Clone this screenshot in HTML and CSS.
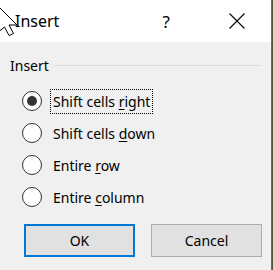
FILE: index.html
```html
<!DOCTYPE html>
<html>
<head>
<meta charset="utf-8">
<link rel="stylesheet" href="styles.css">
</head>
<body>
<div class="dialog">
  <div class="titlebar">
    <span class="title">Insert</span>
    <span class="help">?</span>
    <svg class="close" width="16" height="16" viewBox="0 0 16 16"><path d="M0.5 0.5 L15.5 15.5 M15.5 0.5 L0.5 15.5" stroke="#000" stroke-width="1.1" fill="none"/></svg>
  </div>
  <div class="body">
    <div class="group-head">
      <span class="group-label">Insert</span>
      <span class="group-line"></span>
    </div>
    <div class="options">
      <div class="option">
        <span class="radio checked"></span>
        <span class="label focus">Shift cells <u>r</u>ight</span>
      </div>
      <div class="option">
        <span class="radio"></span>
        <span class="label">Shift cells <u>d</u>own</span>
      </div>
      <div class="option">
        <span class="radio"></span>
        <span class="label">Entire <u>r</u>ow</span>
      </div>
      <div class="option">
        <span class="radio"></span>
        <span class="label">Entire <u>c</u>olumn</span>
      </div>
    </div>
    <div class="buttons">
      <div class="btn default">OK</div>
      <div class="btn">Cancel</div>
    </div>
  </div>
  <svg class="cursor" width="30" height="40" viewBox="-10 -2 30 40"><path d="M-8 0 L17 25 L9 25 L13.5 33.5 L9 35.5 L4.5 27 L-8 37 Z" fill="#fff" stroke="#000" stroke-width="1"/></svg>
</div>
</body>
</html>
```
FILE: styles.css
```css
html, body {
  margin: 0;
  padding: 0;
}
body {
  width: 273px;
  height: 270px;
  background: #4d5a3a;
  font-family: "Noto Sans", "Liberation Sans", sans-serif;
  font-size: 14px;
  color: #000;
  overflow: hidden;
}
.dialog {
  position: relative;
  width: 272px;
  height: 270px;
  box-sizing: border-box;
  border-right: 1px solid #6a6a6a;
  background: #f0f0f0;
  overflow: hidden;
}
.titlebar {
  height: 42px;
  background: #fff;
  display: flex;
  align-items: center;
}
.title {
  margin-left: 15px;
  font-size: 16px;
  flex: 1;
}
.help {
  font-size: 17px;
  margin-right: 59px;
}
.close {
  margin-right: 26px;
}
.body {
  padding: 13px 0 0 10px;
}
.group-head {
  display: flex;
  align-items: center;
  height: 20px;
}
.group-label {
  margin-right: 6px;
}
.group-line {
  width: 206px;
  height: 1px;
  background: #dcdcdc;
}
.options {
  padding: 13px 0 0 12px;
  display: flex;
  flex-direction: column;
  gap: 6px;
}
.option {
  display: flex;
  align-items: center;
  height: 26px;
}
.radio {
  width: 18px;
  height: 18px;
  border: 1.5px solid #333;
  border-radius: 50%;
  background: #fff;
  display: flex;
  align-items: center;
  justify-content: center;
  margin-right: 8px;
  flex: none;
}
.radio.checked::after {
  content: "";
  width: 10px;
  height: 10px;
  border-radius: 50%;
  background: #333;
}
.label {
  padding: 2px 2px;
  border: 1px dotted transparent;
  line-height: 19px;
}
.label.focus {
  border-color: #000;
}
.label u {
  text-underline-offset: 2px;
}
.buttons {
  display: flex;
  gap: 16px;
  padding: 14px 0 0 14px;
}
.btn {
  width: 111px;
  height: 33px;
  box-sizing: border-box;
  background: #e1e1e1;
  border: 1px solid #adadad;
  display: flex;
  align-items: center;
  justify-content: center;
}
.btn.default {
  border: 2px solid #0078d7;
}
.cursor {
  position: absolute;
  left: -10px;
  top: -2px;
}
```
